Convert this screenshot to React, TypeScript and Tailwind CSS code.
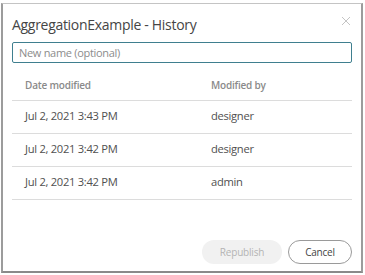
import React from 'react';

const rows = [
  { date: 'Jul 2, 2021 3:43 PM', user: 'designer' },
  { date: 'Jul 2, 2021 3:42 PM', user: 'designer' },
  { date: 'Jul 2, 2021 3:42 PM', user: 'admin' },
];

export default function App(): React.JSX.Element {
  return (
    <div className="h-[275px] w-[365px] bg-white pl-[1px] pt-[3px]" style={{ fontFamily: '"Open Sans", "Noto Sans", sans-serif' }}>
      <div className="flex h-[270px] w-[362px] flex-col border-x-2 border-t border-b-2 border-x-[#9c9c9c] border-t-[#c4c4c4] border-b-[#8a8a8a] bg-white px-[9px]">
        <div className="flex items-start justify-between pt-[11px]">
          <h1 className="text-[14px] leading-[19px] tracking-[-0.3px] text-[#454545]">AggregationExample - History</h1>
          <button type="button" className="mr-[1px] mt-[1px]">
            <svg width="10" height="10" viewBox="0 0 10 10" fill="none" stroke="#c4c4c4" strokeWidth="1">
              <path d="M1 1 L9 9 M9 1 L1 9" />
            </svg>
          </button>
        </div>
        <input
          placeholder="New name (optional)"
          className="mt-[8px] h-[21px] w-full rounded-[2px] border border-[#3f7f8f] px-[6px] text-[11px] tracking-[-0.3px] text-[#333] outline-none placeholder:text-[#8c8c8c]"
        />
        <table className="mt-[14px] w-full border-collapse text-left">
          <thead>
            <tr className="border-b border-[#dcdcdc]">
              <th className="h-[23px] pb-[5px] pl-[13px] align-middle text-[10px] font-semibold tracking-[-0.2px] text-[#8a8a8a]">Date modified</th>
              <th className="h-[23px] pb-[5px] pl-[13px] align-middle text-[10px] font-semibold tracking-[-0.2px] text-[#8a8a8a]">Modified by</th>
            </tr>
          </thead>
          <tbody>
            {rows.map((r, i) => (
              <tr key={i} className="border-b border-[#dcdcdc]">
                <td className="h-[33px] w-[186px] pl-[13px] text-[11.2px] tracking-[-0.3px] text-[#505050]">{r.date}</td>
                <td className="h-[33px] pl-[13px] text-[11.2px] tracking-[-0.3px] text-[#505050]">{r.user}</td>
              </tr>
            ))}
          </tbody>
        </table>
        <div className="mt-auto mb-[7px] flex justify-end gap-[6px]">
          <button type="button" className="h-[24px] w-[80px] rounded-full bg-[#f1f1f1] text-[10px] tracking-[-0.2px] text-[#b4b4b4]">
            Republish
          </button>
          <button type="button" className="h-[24px] w-[64px] rounded-full border border-[#9a9a9a] text-[10px] tracking-[-0.2px] text-[#444]">
            Cancel
          </button>
        </div>
      </div>
    </div>
  );
}
